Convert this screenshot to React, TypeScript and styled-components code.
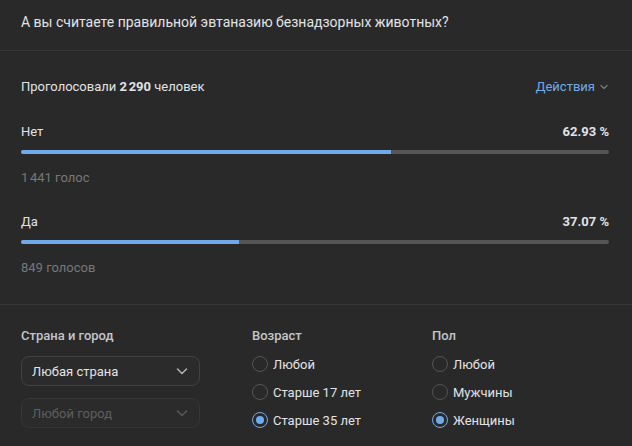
import React from "react";
import styled, { createGlobalStyle } from "styled-components";

const Global = createGlobalStyle`
  html, body { margin: 0; padding: 0; background: #292929; }
  body { font-family: Roboto, "Noto Sans", "Liberation Sans", sans-serif; color: #e1e3e6; -webkit-font-smoothing: antialiased; }
`;

const Page = styled.div`
  width: 632px;
  height: 446px;
  background: #292929;
  overflow: hidden;
`;

const Header = styled.div`
  height: 51px;
  box-sizing: border-box;
  padding: 0 21px;
  display: flex;
  align-items: center;
  border-bottom: 1px solid #363636;
  font-size: 14px;
  line-height: 18px;
  color: #e1e3e6;
  padding-bottom: 6px;
`;

const Results = styled.div`
  padding: 27px 23px 27px 21px;
  border-bottom: 1px solid #363636;
  display: flex;
  flex-direction: column;
`;

const SummaryRow = styled.div`
  display: flex;
  justify-content: space-between;
  align-items: center;
  font-size: 13px;
  line-height: 18px;
  margin-bottom: 27px;
`;

const Strong = styled.b`
  font-weight: 700;
`;

const Actions = styled.span`
  color: #71aaeb;
  display: flex;
  align-items: center;
  gap: 4px;
  font-size: 13px;
`;

const Option = styled.div<{ $last?: boolean }>`
  display: flex;
  flex-direction: column;
  margin-bottom: ${(p) => (p.$last ? 0 : 26)}px;
`;

const OptionHead = styled.div`
  display: flex;
  justify-content: space-between;
  font-size: 13px;
  line-height: 18px;
`;

const Percent = styled.span`
  font-weight: 700;
`;

const Track = styled.div`
  height: 4px;
  border-radius: 2px;
  background: #555555;
  margin-top: 9px;
  overflow: hidden;
`;

const Fill = styled.div`
  height: 100%;
  background: #71aaeb;
`;

const Count = styled.div`
  margin-top: 15px;
  font-size: 13px;
  line-height: 18px;
  color: #76787a;
`;

const Filters = styled.div`
  padding: 22px 21px 0 21px;
  display: grid;
  grid-template-columns: 179px 128px 1fr;
  column-gap: 52px;
`;

const Column = styled.div`
  display: flex;
  flex-direction: column;
`;

const ColTitle = styled.div`
  font-size: 13px;
  line-height: 18px;
  font-weight: 500;
  color: #c4c6c9;
`;

const Select = styled.div<{ $disabled?: boolean }>`
  height: 30px;
  box-sizing: border-box;
  border: 1px solid ${(p) => (p.$disabled ? "#363636" : "#424242")};
  border-radius: 8px;
  display: flex;
  align-items: center;
  justify-content: space-between;
  padding: 0 9px 0 10px;
  font-size: 13px;
  color: ${(p) => (p.$disabled ? "#5d5f61" : "#e1e3e6")};
  margin-top: ${(p) => (p.$disabled ? 12 : 11)}px;
  background: #2b2b2b;
`;

const RadioList = styled.div`
  margin-top: 5px;
  display: flex;
  flex-direction: column;
`;

const RadioRow = styled.div`
  height: 28px;
  display: flex;
  align-items: center;
  gap: 5px;
  font-size: 13px;
  color: #e1e3e6;
`;

const Circle = styled.span<{ $on?: boolean }>`
  width: 16px;
  height: 16px;
  box-sizing: border-box;
  border-radius: 50%;
  border: 1.5px solid ${(p) => (p.$on ? "#71aaeb" : "#555555")};
  display: flex;
  align-items: center;
  justify-content: center;
  flex: none;
  &::after {
    content: "";
    width: 8px;
    height: 8px;
    border-radius: 50%;
    background: ${(p) => (p.$on ? "#71aaeb" : "transparent")};
  }
`;

const Chevron = ({ color, size = 16 }: { color: string; size?: number }) => (
  <svg width={size} height={size} viewBox="0 0 16 16" fill="none">
    <path d="M3.5 6 L8 10.5 L12.5 6" stroke={color} strokeWidth="1.6" strokeLinecap="round" strokeLinejoin="round" />
  </svg>
);

const SmallChevron = () => (
  <svg width="10" height="10" viewBox="0 0 10 10" fill="none">
    <path d="M2 3.5 L5 6.5 L8 3.5" stroke="#76787a" strokeWidth="1.3" strokeLinecap="round" strokeLinejoin="round" />
  </svg>
);

const options = [
  { label: "Нет", pct: 62.93, count: "1\u202F441 голос" },
  { label: "Да", pct: 37.07, count: "849 голосов" },
];

const Radio = ({ label, on }: { label: string; on?: boolean }) => (
  <RadioRow>
    <Circle $on={on} />
    {label}
  </RadioRow>
);

export default function App() {
  return (
    <Page>
      <Global />
      <Header>А вы считаете правильной эвтаназию безнадзорных животных?</Header>
      <Results>
        <SummaryRow>
          <span>
            Проголосовали <Strong>2{"\u202F"}290</Strong> человек
          </span>
          <Actions>
            Действия <SmallChevron />
          </Actions>
        </SummaryRow>
        {options.map((o, i) => (
          <Option key={o.label} $last={i === options.length - 1}>
            <OptionHead>
              <span>{o.label}</span>
              <Percent>{o.pct.toFixed(2)} %</Percent>
            </OptionHead>
            <Track>
              <Fill style={{ width: `${o.pct}%` }} />
            </Track>
            <Count>{o.count}</Count>
          </Option>
        ))}
      </Results>
      <Filters>
        <Column>
          <ColTitle>Страна и город</ColTitle>
          <Select>
            Любая страна <Chevron color="#aaaeb3" />
          </Select>
          <Select $disabled>
            Любой город <Chevron color="#55585b" />
          </Select>
        </Column>
        <Column>
          <ColTitle>Возраст</ColTitle>
          <RadioList>
            <Radio label="Любой" />
            <Radio label="Старше 17 лет" />
            <Radio label="Старше 35 лет" on />
          </RadioList>
        </Column>
        <Column>
          <ColTitle>Пол</ColTitle>
          <RadioList>
            <Radio label="Любой" />
            <Radio label="Мужчины" />
            <Radio label="Женщины" on />
          </RadioList>
        </Column>
      </Filters>
    </Page>
  );
}
